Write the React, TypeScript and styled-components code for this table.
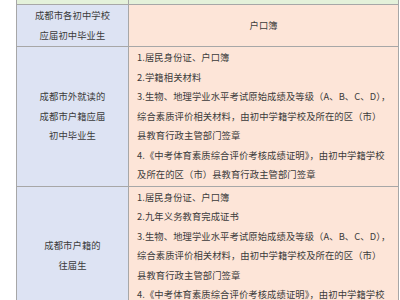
import React from 'react';
import styled, { createGlobalStyle } from 'styled-components';

const GlobalStyle = createGlobalStyle`
  html, body {
    margin: 0;
    padding: 0;
    background: #fff;
  }
  body {
    font-family: "Noto Sans CJK SC", "Noto Sans", "Liberation Sans", sans-serif;
    color: #3b3b3b;
  }
`;

const Table = styled.div`
  display: grid;
  grid-template-columns: 112px 1fr;
  width: 368px;
  margin-left: 16px;
  border-left: 1px solid #a7a7a7;
  font-size: 9.3px;
  line-height: 19.5px;
`;

const Cell = styled.div<{ $tone: 'head' | 'side' | 'body'; $center?: boolean }>`
  border-right: 1px solid #a7a7a7;
  border-bottom: 1px solid #a7a7a7;
  padding: 1px 8px;
  background: ${(p) =>
    p.$tone === 'head' ? '#e4f1da' : p.$tone === 'side' ? '#dde3f3' : '#fde5d8'};
  display: flex;
  flex-direction: column;
  justify-content: center;
  align-items: ${(p) => (p.$center ? 'center' : 'flex-start')};
  text-align: ${(p) => (p.$center ? 'center' : 'left')};
  white-space: nowrap;
`;

const HeadCell = styled(Cell)`
  height: 4px;
  padding: 0;
`;

const Line = styled.div`
  letter-spacing: 0.1px;
`;

type Row = { who: string[]; docs: string[]; center?: boolean };

const rows: Row[] = [
  {
    who: ['成都市各初中学校', '应届初中毕业生'],
    docs: ['户口簿'],
    center: true,
  },
  {
    who: ['成都市外就读的', '成都市户籍应届', '初中毕业生'],
    docs: [
      '1.居民身份证、户口簿',
      '2.学籍相关材料',
      '3.生物、地理学业水平考试原始成绩及等级（A、B、C、D），',
      '综合素质评价相关材料，由初中学籍学校及所在的区（市）',
      '县教育行政主管部门签章',
      '4.《中考体育素质综合评价考核成绩证明》，由初中学籍学校',
      '及所在的区（市）县教育行政主管部门签章',
    ],
  },
  {
    who: ['成都市户籍的', '往届生'],
    docs: [
      '1.居民身份证、户口簿',
      '2.九年义务教育完成证书',
      '3.生物、地理学业水平考试原始成绩及等级（A、B、C、D），',
      '综合素质评价相关材料，由初中学籍学校及所在的区（市）',
      '县教育行政主管部门签章',
      '4.《中考体育素质综合评价考核成绩证明》，由初中学籍学校',
      '及所在的区（市）县教育行政主管部门签章',
    ],
  },
];

export default function App() {
  return (
    <>
      <GlobalStyle />
      <Table>
        <HeadCell $tone="head" />
        <HeadCell $tone="head" />
        {rows.map((row, i) => (
          <React.Fragment key={i}>
            <Cell $tone="side" $center>
              {row.who.map((t) => (
                <Line key={t}>{t}</Line>
              ))}
            </Cell>
            <Cell $tone="body" $center={row.center}>
              {row.docs.map((t) => (
                <Line key={t}>{t}</Line>
              ))}
            </Cell>
          </React.Fragment>
        ))}
      </Table>
    </>
  );
}
